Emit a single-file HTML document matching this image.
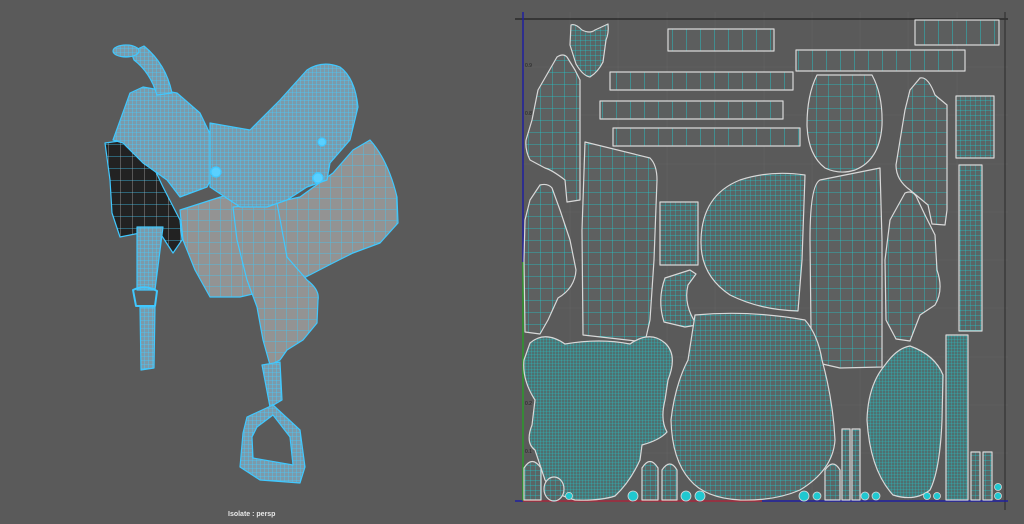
<!DOCTYPE html>
<html><head><meta charset="utf-8"><style>
html,body{margin:0;padding:0;background:#5a5a5a;width:1024px;height:524px;overflow:hidden}
svg{display:block}
.lbl{position:absolute;left:228px;top:511px;font:bold 7px "Liberation Sans",sans-serif;color:#e8e8e8}
</style></head><body>
<svg width="1024" height="524" viewBox="0 0 1024 524" xmlns="http://www.w3.org/2000/svg">
<defs>
<pattern id="g" width="12" height="12" patternUnits="userSpaceOnUse"><rect width="12" height="12" fill="#5e6060"/><path d="M0 0H12M0 0V12" stroke="#20c8cc" stroke-width="0.8"/></pattern>
<pattern id="f" width="5" height="5" patternUnits="userSpaceOnUse"><rect width="5" height="5" fill="#5a6565"/><path d="M0 0H5M0 0V5" stroke="#20c4c8" stroke-width="0.7"/></pattern>
<pattern id="vf" width="3" height="3" patternUnits="userSpaceOnUse"><rect width="3" height="3" fill="#4f7070"/><path d="M0 0H3M0 0V3" stroke="#22c8cc" stroke-width="0.6"/></pattern>
<pattern id="rr" width="14" height="20" patternUnits="userSpaceOnUse"><rect width="14" height="20" fill="#5c5e5e"/><path d="M0 0V20" stroke="#20c8cc" stroke-width="0.9"/></pattern>
<pattern id="sg" width="11" height="11" patternUnits="userSpaceOnUse"><rect width="11" height="11" fill="#939393"/><path d="M0 0H11M0 0V11" stroke="#3fc6f5" stroke-width="0.8"/></pattern>
<pattern id="sf" width="4" height="4" patternUnits="userSpaceOnUse"><rect width="4" height="4" fill="#7c9aaa"/><path d="M0 0H4M0 0V4" stroke="#44ccff" stroke-width="0.8"/></pattern>
<pattern id="sd" width="12" height="12" patternUnits="userSpaceOnUse"><rect width="12" height="12" fill="#222"/><path d="M0 0H12" stroke="#3fc6f5" stroke-width="0.8"/><path d="M0 0V12" stroke="#aaa" stroke-width="0.8"/></pattern>
</defs>
<g stroke="#646464" stroke-width="0.6">
<path d="M523 67H1008M523 115H1008M523 164H1008M523 212H1008M523 260H1008M523 308H1008M523 357H1008M523 405H1008M523 453H1008"/>
<path d="M570 12V501M618 12V501M667 12V501M715 12V501M764 12V501M812 12V501M860 12V501M908 12V501M957 12V501"/>
</g>
<path d="M515 19H1008" stroke="#222" stroke-width="1.2"/>
<path d="M1005 12V510" stroke="#333" stroke-width="1.2"/>
<path d="M515 501H1008" stroke="#2020a0" stroke-width="1.5"/>
<path d="M523 12V262" stroke="#2020a0" stroke-width="1.5"/>
<path d="M523 262V501" stroke="#2a9a2a" stroke-width="1.5"/>
<path d="M523 501H762" stroke="#b03030" stroke-width="1.5"/>
<g font-family="Liberation Sans" font-size="5" fill="#222"><text x="525" y="67">0.9</text><text x="525" y="115">0.8</text><text x="525" y="405">0.2</text><text x="525" y="453">0.1</text></g>
<g stroke="#d8d8d8" stroke-width="1.2" stroke-linejoin="round">
<rect x="668" y="29" width="106" height="22" fill="url(#rr)"/>
<rect x="915" y="20" width="84" height="25" fill="url(#rr)"/>
<rect x="796" y="50" width="169" height="21" fill="url(#rr)"/>
<rect x="610" y="72" width="183" height="18" fill="url(#rr)"/>
<rect x="600" y="101" width="183" height="18" fill="url(#rr)"/>
<rect x="613" y="128" width="187" height="18" fill="url(#rr)"/>
<path d="M571 25Q575 23 582 30Q590 34 595 30L608 24Q609 33 606 40L603 62Q598 72 590 77Q583 76 576 64L570 45Z" fill="url(#f)"/>
<path d="M557 57Q563 53 567 57L575 70L580 80L580 200L567 202L565 180Q552 170 545 168L530 160Q525 150 526 140L532 120L538 90Z" fill="url(#g)"/>
<path d="M817 75L872 75Q883 95 882 125Q880 160 855 170Q840 175 825 168Q808 155 807 125Q807 95 817 75Z" fill="url(#g)"/>
<path d="M920 78Q928 76 935 95L947 105L947 210L945 225L932 224L928 205L910 190Q896 180 896 165L905 110L910 90Z" fill="url(#g)"/>
<rect x="956" y="96" width="38" height="62" fill="url(#f)"/>
<rect x="959" y="165" width="23" height="166" fill="url(#f)"/>
<path d="M585 142L650 158Q657 165 657 180L654 260L650 320L645 342L583 335L582 230Z" fill="url(#g)"/>
<rect x="660" y="202" width="38" height="63" fill="url(#f)"/>
<path d="M805 175L802 260L798 311Q760 310 730 295Q700 275 701 240Q702 195 740 180Q770 170 805 175Z" fill="url(#f)"/>
<path d="M820 180L880 168L882 240L882 367L840 368L818 363L811 330L810 240Q810 185 820 180Z" fill="url(#g)"/>
<path d="M540 185Q548 183 552 188L560 210L570 240L576 270Q575 288 558 298L548 320L540 334L525 332L524 260L525 220L530 200Z" fill="url(#g)"/>
<path d="M905 193Q912 190 916 196L925 215L935 235L937 270Q944 290 935 305L920 315L910 341L896 339L886 320L885 260L890 220Z" fill="url(#g)"/>
<path d="M665 278L690 270L696 274L688 285Q683 305 697 325L685 327L664 322Q657 300 665 278Z" fill="url(#f)"/>
<path d="M530 343Q545 330 565 344Q600 338 630 344Q650 330 665 343Q678 355 668 380L665 400Q660 420 667 432Q660 440 642 445L640 460Q630 482 615 496Q600 501 575 500Q552 494 545 480L540 465L535 450Q525 443 532 425L535 400Q522 380 524 360Z" fill="url(#vf)"/>
<path d="M695 315Q750 310 805 320Q818 335 822 360Q833 400 835 440Q833 470 800 490Q775 501 740 500Q705 498 690 480Q672 460 671 420Q675 385 688 360Z" fill="url(#f)"/>
<path d="M910 346Q935 355 943 375L942 420Q940 470 930 490Q915 502 893 495Q870 470 867 420Q868 385 885 365Q897 348 910 346Z" fill="url(#vf)"/>
<rect x="946" y="335" width="22" height="165" fill="url(#vf)"/>
<rect x="842" y="429" width="8" height="71" fill="url(#f)"/>
<rect x="852" y="429" width="8" height="71" fill="url(#f)"/>
<rect x="971" y="452" width="9" height="48" fill="url(#f)"/>
<rect x="983" y="452" width="9" height="48" fill="url(#f)"/>
<path d="M524 500V468Q532 455 541 468V500Z" fill="url(#f)"/>
<path d="M642 500V468Q650 455 658 468V500Z" fill="url(#f)"/>
<path d="M662 500V470Q670 458 677 470V500Z" fill="url(#f)"/>
<path d="M825 500V470Q833 458 840 470V500Z" fill="url(#f)"/>
<ellipse cx="554" cy="489" rx="10" ry="12" fill="url(#f)"/>
</g>
<g fill="#20c8d0" stroke="#d8d8d8" stroke-width="0.8">
<circle cx="569" cy="496" r="3.5"/><circle cx="633" cy="496" r="5"/><circle cx="686" cy="496" r="5"/><circle cx="700" cy="496" r="5"/>
<circle cx="804" cy="496" r="5"/><circle cx="817" cy="496" r="4"/><circle cx="865" cy="496" r="4"/><circle cx="876" cy="496" r="4"/>
<circle cx="927" cy="496" r="3.5"/><circle cx="937" cy="496" r="3.5"/><circle cx="998" cy="487" r="3.5"/><circle cx="998" cy="496" r="3.5"/>
</g>
<g stroke="#40c8ff" stroke-width="1.2" stroke-linejoin="round">
<path d="M105 143L127 140L147 153L163 187L180 220L182 240L173 253L160 233L140 233L120 237L112 213L110 180Z" fill="url(#sd)"/>
<path d="M137 227L163 227L155 290L137 290Z" fill="url(#sf)"/>
<path d="M133 290Q145 284 157 291L155 306L136 306Z" fill="none" stroke-width="2"/>
<path d="M140 307L155 307L154 368L141 370Z" fill="url(#sf)"/>
<path d="M180 210L233 193L273 203L300 197L333 173L353 150L370 140Q388 160 397 197L398 223L380 243L353 253L333 263L300 280L270 290L240 297L210 297L195 270L183 240Z" fill="url(#sg)"/>
<path d="M233 207L277 203L287 257L307 280Q320 290 318 300L317 323L303 340L287 350L280 360L270 365L263 340L257 307L247 280L237 240Z" fill="url(#sg)"/>
<path d="M130 93L143 87L177 93L200 113L213 140L218 167L207 187L180 197L167 180L143 163L123 143L113 140Z" fill="url(#sf)"/>
<path d="M210 123L250 130L280 100L307 70Q322 60 340 67Q355 78 358 107L350 140L330 163L327 180L307 187L287 200L267 207L240 207L210 187Z" fill="url(#sf)"/>
<path d="M131 52L144 46Q166 64 172 93L157 95Q150 72 134 60Z" fill="url(#sf)"/>
<ellipse cx="126" cy="51" rx="13" ry="6" fill="url(#sf)"/>
<circle cx="216" cy="172" r="5" fill="#5ad0ff"/><circle cx="318" cy="178" r="5" fill="#5ad0ff"/><circle cx="322" cy="142" r="4" fill="#5ad0ff"/>
<path d="M262 365L280 362L282 400L270 407Z" fill="url(#sf)"/>
<path fill-rule="evenodd" d="M247 417L273 405L300 430L305 467L300 483L260 480L240 467L243 433ZM257 427L273 415L290 437L293 465L253 458L252 437Z" fill="url(#sf)"/>
</g>
</svg>
<div class="lbl">Isolate : persp</div>
</body></html>
